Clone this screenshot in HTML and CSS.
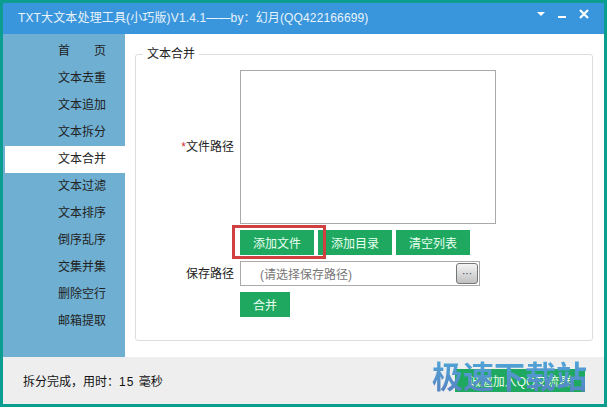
FILE: index.html
```html
<!DOCTYPE html>
<html lang="zh-CN">
<head>
    <meta charset="UTF-8">
    <title>TXT大文本处理工具</title>
    <link rel="stylesheet" href="styles.css">
</head>
<body>
    <div class="window">
        <div class="titlebar">
            <span class="title">TXT大文本处理工具(小巧版)V1.4.1——by：幻月(QQ422166699)</span>
            <div class="win-btns">
                <svg width="10" height="12" viewBox="0 0 10 12"><path d="M1 4h8L5 8z" fill="#fff"/></svg>
                <svg width="12" height="12" viewBox="0 0 12 12"><path d="M2 8h8v2H2z" fill="#fff"/></svg>
                <svg width="12" height="12" viewBox="0 0 12 12"><path d="M2 2l8 8M10 2l-8 8" stroke="#fff" stroke-width="2.2"/></svg>
            </div>
        </div>
        <div class="body">
            <ul class="sidebar">
                <li class="home"><span>首</span><span>页</span></li>
                <li>文本去重</li>
                <li>文本追加</li>
                <li>文本拆分</li>
                <li class="active">文本合并</li>
                <li>文本过滤</li>
                <li>文本排序</li>
                <li>倒序乱序</li>
                <li>交集并集</li>
                <li>删除空行</li>
                <li>邮箱提取</li>
            </ul>
            <div class="content">
                <fieldset class="group">
                    <legend>文本合并</legend>
                    <div class="row">
                        <label class="field-label"><i>*</i>文件路径</label>
                        <div class="filelist"></div>
                    </div>
                    <div class="btn-row">
                        <div class="btn-wrap">
                            <button class="btn">添加文件</button>
                            <div class="highlight"></div>
                        </div>
                        <button class="btn">添加目录</button>
                        <button class="btn">清空列表</button>
                    </div>
                    <div class="row save-row">
                        <label class="field-label">保存路径</label>
                        <div class="savebox">
                            <span>(请选择保存路径)</span>
                            <button class="browse">···</button>
                        </div>
                    </div>
                    <div class="btn-row merge-row">
                        <button class="btn btn-merge">合并</button>
                    </div>
                </fieldset>
            </div>
        </div>
        <div class="footer">
            <span class="status">拆分完成，用时：<span class="num">15 </span>毫秒</span>
            <button class="btn btn-qq">诚邀加入QQ交流群</button>
            <div class="watermark">极速下载站</div>
        </div>
    </div>
</body>
</html>
```

FILE: styles.css
```css
* {
    box-sizing: border-box;
}
body, html {
    margin: 0;
    padding: 0;
    height: 100%;
    font-family: "Liberation Sans", "Noto Sans CJK SC", sans-serif;
    font-size: 12px;
    color: #222;
}
.window {
    height: 407px;
    padding: 3px;
    background: #0b9e90;
    display: flex;
    flex-direction: column;
}
.titlebar {
    height: 31px;
    background: #3a96dc;
    color: #e8f3fb;
    display: flex;
    align-items: center;
    justify-content: space-between;
    padding: 0 14px 5px 15px;
}
.title {
    letter-spacing: 0.14px;
}
.win-btns {
    display: flex;
    align-items: center;
    gap: 10px;
    margin-bottom: 4px;
}
.body {
    flex: 1;
    display: flex;
    min-height: 0;
}
.sidebar {
    width: 122px;
    margin: 0;
    padding: 4px 0 0 2px;
    list-style: none;
    background: #6fb0d2;
}
.sidebar li {
    height: 27px;
    line-height: 27px;
    padding-left: 53px;
}
.sidebar .home {
    display: flex;
    gap: 24px;
}
.sidebar .active {
    background: #fff;
}
.content {
    flex: 1;
    background: #fff;
    padding: 13px 11px 16px 10px;
}
.group {
    height: 100%;
    margin: 0;
    padding: 13px 0 0 0;
    border: 1px solid #ddd;
    border-radius: 3px;
    display: block;
}
.group legend {
    margin: 0 0 -4px 7px;
    padding: 0 4px;
    line-height: 14px;
}
.row {
    display: flex;
    align-items: center;
}
.field-label {
    width: 98px;
    margin: 0 6px 3px 0;
    text-align: right;
}
.field-label i {
    color: #c33;
    font-style: normal;
}
.filelist {
    width: 256px;
    height: 154px;
    border: 1px solid #aaa;
}
.btn-row {
    display: flex;
    gap: 4px;
    margin: 6px 0 0 104px;
}
.btn {
    width: 74px;
    height: 25px;
    border: none;
    padding: 0;
    background: #1fa85f;
    color: #eafff2;
    font-family: inherit;
    font-size: 12px;
}
.btn-wrap {
    position: relative;
    height: 25px;
}
.highlight {
    position: absolute;
    left: -8px;
    top: -5px;
    width: 94px;
    height: 34px;
    border: 3px solid #d04040;
}
.save-row {
    margin-top: 6px;
}
.savebox {
    width: 240px;
    height: 25px;
    border: 1px solid #aaa;
    display: flex;
    align-items: center;
    justify-content: space-between;
    padding: 0 1px 0 19px;
    color: #777;
}
.browse {
    width: 22px;
    height: 21px;
    padding: 0;
    border: 1px solid #777;
    border-radius: 3px;
    background: linear-gradient(#f4f4f4, #c0c0c0);
    color: #333;
    font-size: 10px;
    font-family: inherit;
}
.merge-row {
    margin-top: 6px;
}
.btn-merge {
    width: 50px;
}
.footer {
    height: 47px;
    position: relative;
    background: #eeeeee;
    display: flex;
    align-items: center;
    justify-content: space-between;
    padding: 0 19px 0 20px;
    color: #111;
}
.num {
    letter-spacing: 1px;
}
.btn-qq {
    width: 130px;
    height: 23px;
}
.watermark {
    position: absolute;
    right: 17px;
    top: 2px;
    font-size: 31px;
    line-height: 38px;
    font-weight: 700;
    background: linear-gradient(#4ea6d8, #5a7fc0);
    -webkit-background-clip: text;
    background-clip: text;
    color: transparent;
}
```
